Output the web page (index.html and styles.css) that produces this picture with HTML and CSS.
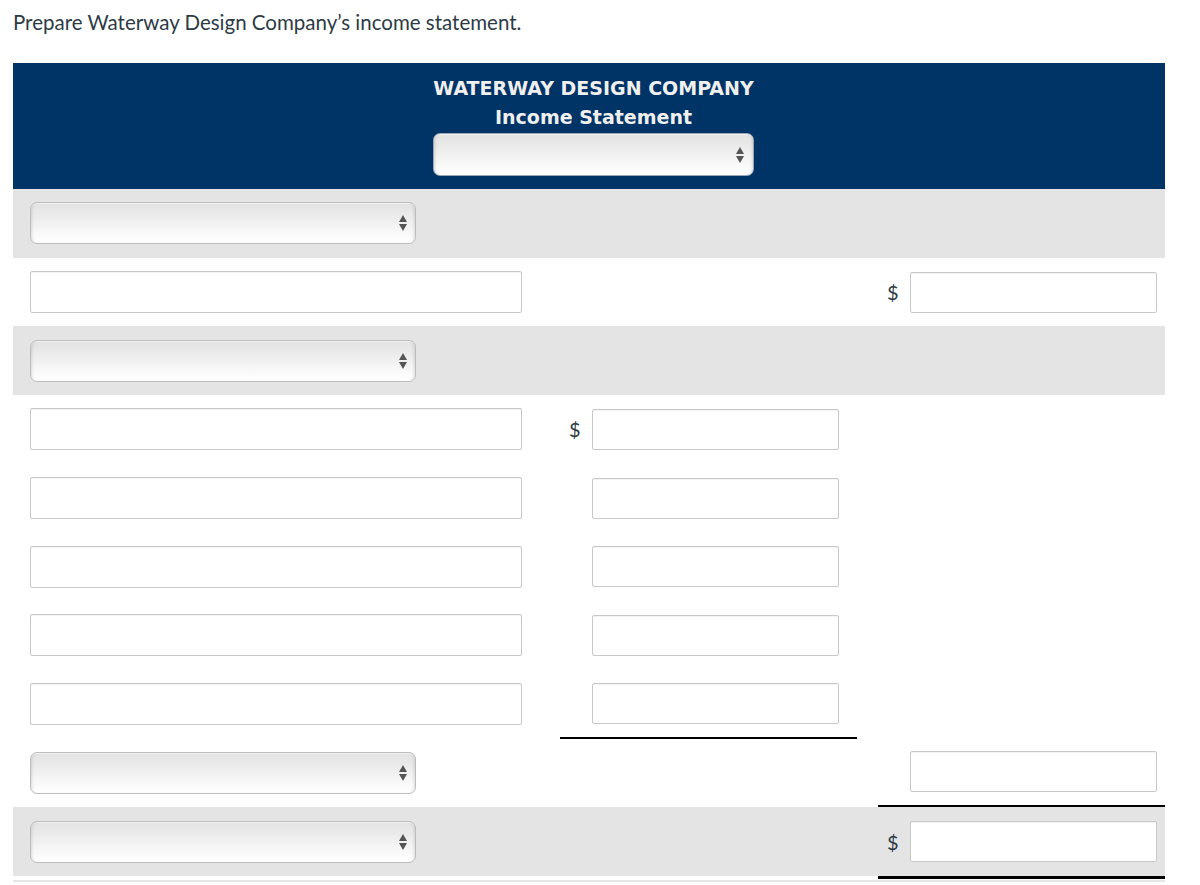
FILE: index.html
```html
<!DOCTYPE html>
<html>
<head>
<meta charset="utf-8">
<title>Income Statement</title>
<link rel="stylesheet" href="styles.css">
</head>
<body>
<div class="page">
  <p class="prompt">Prepare Waterway Design Company’s income statement.</p>
  <div class="sheet">
    <div class="head">
      <div class="company">WATERWAY DESIGN COMPANY</div>
      <div class="stmt">Income Statement</div>
      <div class="sel sel-head"><svg class="arr" viewBox="0 0 8 16"><polygon points="0,7 4,0 8,7"/><polygon points="0,9 8,9 4,16"/></svg></div>
    </div>

    <div class="row gray">
      <div class="c1"><div class="sel"><svg class="arr" viewBox="0 0 8 16"><polygon points="0,7 4,0 8,7"/><polygon points="0,9 8,9 4,16"/></svg></div></div>
      <div class="c2"></div>
      <div class="c3"></div>
    </div>

    <div class="row">
      <div class="c1"><input class="txt wide" type="text"></div>
      <div class="c2"></div>
      <div class="c3"><span class="dollar">$</span><input class="txt num" type="text"></div>
    </div>

    <div class="row gray">
      <div class="c1"><div class="sel"><svg class="arr" viewBox="0 0 8 16"><polygon points="0,7 4,0 8,7"/><polygon points="0,9 8,9 4,16"/></svg></div></div>
      <div class="c2"></div>
      <div class="c3"></div>
    </div>

    <div class="row">
      <div class="c1"><input class="txt wide" type="text"></div>
      <div class="c2"><span class="dollar">$</span><input class="txt num" type="text"></div>
      <div class="c3"></div>
    </div>

    <div class="row">
      <div class="c1"><input class="txt wide" type="text"></div>
      <div class="c2"><span class="dollar"></span><input class="txt num" type="text"></div>
      <div class="c3"></div>
    </div>

    <div class="row">
      <div class="c1"><input class="txt wide" type="text"></div>
      <div class="c2"><span class="dollar"></span><input class="txt num" type="text"></div>
      <div class="c3"></div>
    </div>

    <div class="row">
      <div class="c1"><input class="txt wide" type="text"></div>
      <div class="c2"><span class="dollar"></span><input class="txt num" type="text"></div>
      <div class="c3"></div>
    </div>

    <div class="row">
      <div class="c1"><input class="txt wide" type="text"></div>
      <div class="c2 underline"><span class="dollar"></span><input class="txt num" type="text"></div>
      <div class="c3"></div>
    </div>

    <div class="row">
      <div class="c1"><div class="sel"><svg class="arr" viewBox="0 0 8 16"><polygon points="0,7 4,0 8,7"/><polygon points="0,9 8,9 4,16"/></svg></div></div>
      <div class="c2"></div>
      <div class="c3 underline"><span class="dollar"></span><input class="txt num" type="text"></div>
    </div>

    <div class="row gray last">
      <div class="c1"><div class="sel"><svg class="arr" viewBox="0 0 8 16"><polygon points="0,7 4,0 8,7"/><polygon points="0,9 8,9 4,16"/></svg></div></div>
      <div class="c2"></div>
      <div class="c3 total"><span class="dollar">$</span><input class="txt num" type="text"></div>
    </div>
    <div class="foot"></div>
  </div>
</div>
</body>
</html>
```

FILE: styles.css
```css
* { box-sizing: border-box; }

html, body {
  margin: 0;
  padding: 0;
  background: #ffffff;
}

.page {
  padding: 10px 13px 0 13px;
  width: 1178px;
}

.prompt {
  margin: 0;
  font-family: Lato, "Open Sans", sans-serif;
  font-size: 20.5px;
  line-height: 24px;
  color: #2d3b45;
}

.sheet {
  margin-top: 29px;
  width: 1152px;
}

.head {
  background: #003366;
  padding: 11px 0 13px 9px;
  display: flex;
  flex-direction: column;
  align-items: center;
  font-family: "DejaVu Sans", Verdana, sans-serif;
  font-weight: bold;
  color: #f0f0f0;
}

.company,
.stmt {
  font-size: 19px;
  line-height: 29px;
}

.sel {
  width: 386px;
  height: 42px;
  border: 1px solid #bdbdbd;
  border-radius: 7px;
  background: linear-gradient(#e2e2e2 0%, #ececec 35%, #f7f7f7 70%, #ffffff 100%);
  box-shadow: inset 3px 0 3px -2px rgba(0,0,0,0.12), inset -3px 0 3px -2px rgba(0,0,0,0.12), inset 0 1px 0 rgba(255,255,255,0.6);
  display: flex;
  align-items: center;
  justify-content: flex-end;
  padding-right: 8px;
}

.sel-head {
  width: 321px;
  height: 43px;
  margin-top: 1px;
  border-color: #9aa5b5;
  padding-right: 9px;
}

.arr {
  width: 8px;
  height: 16px;
  fill: #555555;
}

.row {
  display: grid;
  grid-template-columns: 547px 297px 308px;
  height: 68.7px;
  background: #ffffff;
}

.row.gray {
  background: #e4e4e4;
}

.c1 {
  display: flex;
  align-items: center;
  padding-left: 17px;
}

.c2,
.c3 {
  display: flex;
  align-items: center;
  padding-left: 9px;
}

.c3 {
  margin-left: 21px;
}

.dollar {
  width: 23px;
  font-family: Lato, "Open Sans", sans-serif;
  font-size: 20px;
  color: #2d3b45;
}

.txt {
  height: 42px;
  margin: 0;
  border: 1px solid #c8c8c8;
  border-radius: 2px;
  background: #ffffff;
  box-shadow: inset 0 1px 1px rgba(0,0,0,0.05);
  font-family: Lato, sans-serif;
  font-size: 16px;
  padding: 0 8px;
}

.txt.wide {
  width: 492px;
}

.txt.num {
  width: 247px;
  height: 41px;
}

.underline {
  border-bottom: 2px solid #000000;
}

.total {
  border-bottom: 3px solid #000000;
  margin-bottom: -3px;
}

.foot {
  margin-top: 4px;
  height: 2px;
  background: #e6e6e6;
}
```
